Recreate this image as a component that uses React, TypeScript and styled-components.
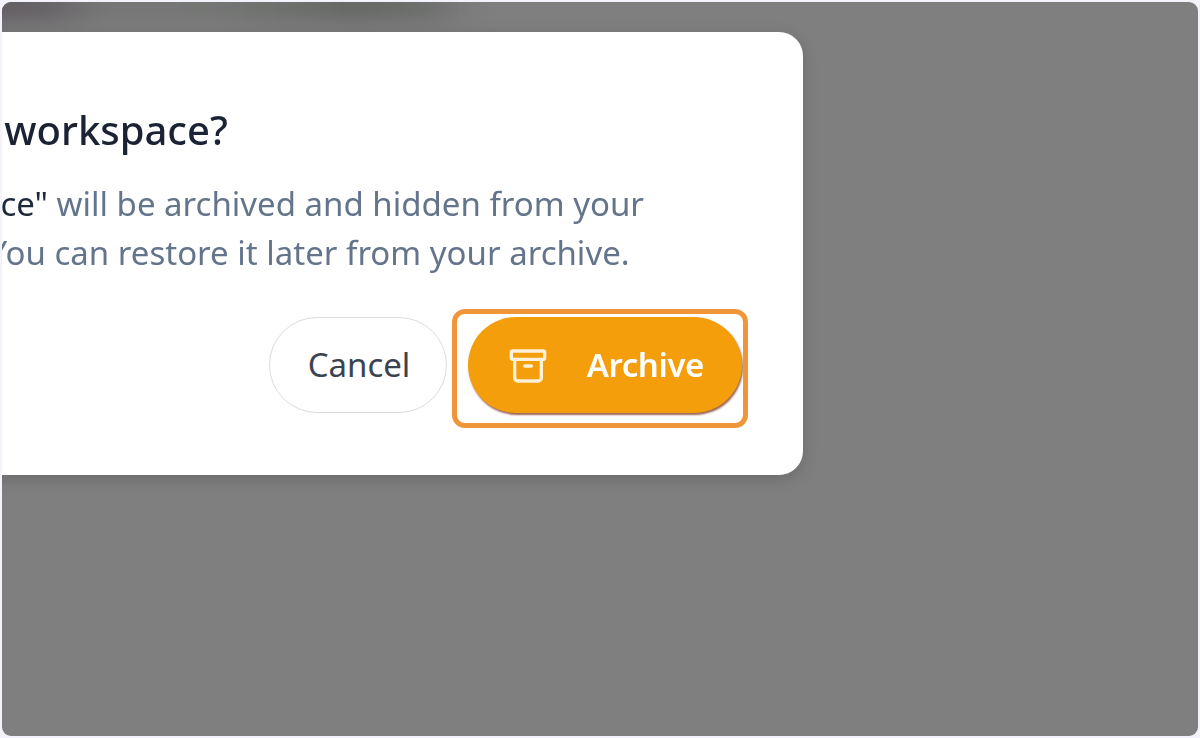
import React from "react";
import styled, { createGlobalStyle } from "styled-components";
import { Archive } from "lucide-react";

const Global = createGlobalStyle`
  html, body { margin: 0; height: 100%; background: #f4f2fb; overflow: hidden; }
  #root { height: 100%; }
`;

const Frame = styled.main`
  box-sizing: border-box;
  width: 1200px;
  height: 738px;
  padding: 2px;
  font-family: "Noto Sans", sans-serif;
`;

const Backdrop = styled.div`
  position: relative;
  width: 100%;
  height: 100%;
  border-radius: 9px;
  overflow: hidden;
  background: #7f7f7f;
`;

const BlurredPage = styled.div`
  position: absolute;
  top: -14px;
  left: -20px;
  width: 500px;
  height: 34px;
  filter: blur(10px);
  background: linear-gradient(
    90deg,
    #5f5a60 0%,
    #666366 14%,
    #767676 24%,
    #747674 45%,
    #6c6e6c 62%,
    #656765 74%,
    #6b6d6b 88%,
    #7f7f7f 100%
  );
`;

const Dialog = styled.section`
  position: absolute;
  top: 30px;
  right: 395px;
  box-sizing: border-box;
  width: 1040px;
  height: 443px;
  padding: 74px 61px 0 0;
  border-radius: 24px;
  background: #fff;
  box-shadow: 0 4px 16px rgba(0, 0, 0, 0.16);
  display: flex;
  flex-direction: column;
`;

const Copy = styled.div`
  margin-left: -1px;
  filter: blur(0.5px);
`;

const Title = styled.h2`
  margin: 0 0 25px -8px;
  font-size: 40px;
  line-height: 48px;
  font-weight: 500;
  color: #1a2233;
  white-space: nowrap;
`;

const Body = styled.p`
  margin: 0;
  font-size: 33px;
  line-height: 49px;
  color: #64748b;
  white-space: nowrap;
`;

const Name = styled.span`
  color: #1e293b;
`;

const Actions = styled.div`
  display: flex;
  justify-content: flex-end;
  align-items: center;
  gap: 21px;
  margin-top: 40px;
`;

const Cancel = styled.button`
  box-sizing: border-box;
  width: 178px;
  height: 96px;
  padding: 0 0 2px 2px;
  border: 1.5px solid #dcdcdc;
  border-radius: 48px;
  background: #fff;
  color: #3b4350;
  font: 400 33px "Noto Sans", sans-serif;
`;

const ConfirmRing = styled.div`
  position: relative;
  display: flex;
`;

const Focus = styled.span`
  position: absolute;
  top: -8px;
  left: -16px;
  right: -6px;
  bottom: -15px;
  border: 5px solid #f0953a;
  border-radius: 13px;
  pointer-events: none;
`;

const Confirm = styled.button`
  box-sizing: border-box;
  width: 274px;
  height: 96px;
  padding: 0 38px 2px 40px;
  border: 0;
  border-radius: 48px;
  background: #f59e0b;
  box-shadow: 1px 2px 2px rgba(120, 50, 30, 0.75);
  color: #fff;
  font: 600 33px "Noto Sans", sans-serif;
  display: flex;
  align-items: center;
  justify-content: space-between;
`;

const Label = styled.span`
  letter-spacing: -0.4px;
  filter: blur(0.4px);
`;

const ArchiveIcon = styled(Archive)`
  position: relative;
  top: 2px;
`;

export default function App() {
  return (
    <Frame>
      <Global />
      <Backdrop>
        <BlurredPage />
        <Dialog role="dialog" aria-modal="true">
          <Copy>
            <Title>Archive your workspace?</Title>
            <Body>
              <Name>"Marketing Space"</Name> will be archived and hidden from your
              <br />
              active sidebar. You can restore it later from your archive.
            </Body>
          </Copy>
          <Actions>
            <Cancel type="button">Cancel</Cancel>
            <ConfirmRing>
              <Focus />
              <Confirm type="button">
                <ArchiveIcon size={40} strokeWidth={2} color="#fff1d9" />
                <Label>Archive</Label>
              </Confirm>
            </ConfirmRing>
          </Actions>
        </Dialog>
      </Backdrop>
    </Frame>
  );
}
